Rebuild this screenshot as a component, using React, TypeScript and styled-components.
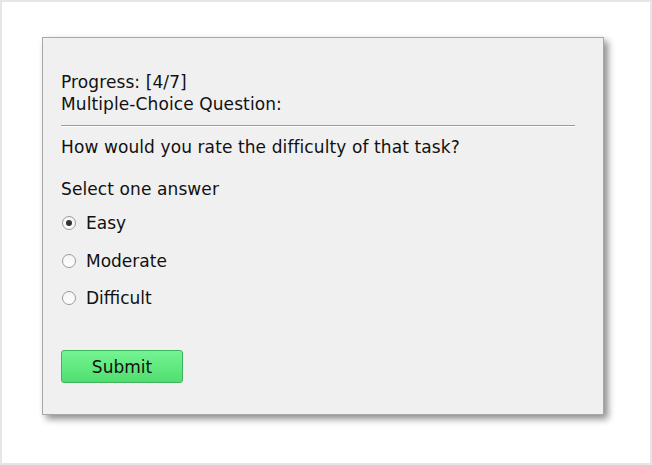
import React, { useState } from "react";
import styled, { createGlobalStyle } from "styled-components";

const Global = createGlobalStyle`
  html, body { margin: 0; padding: 0; background: #ffffff; }
  * { box-sizing: border-box; }
`;

const Frame = styled.div`
  width: 652px;
  height: 465px;
  border: 2px solid #e6e6e6;
  background: #ffffff;
  padding: 35px 0 0 40px;
  font-family: "DejaVu Sans", sans-serif;
  color: #111111;
`;

const Panel = styled.div`
  width: 562px;
  height: 378px;
  background: #f0f0f0;
  border: 1px solid #a8a8a8;
  box-shadow: 4px 4px 7px rgba(0, 0, 0, 0.45);
  padding: 33px 0 0 18px;
  display: flex;
  flex-direction: column;
`;

const Line = styled.div`
  font-size: 17px;
  line-height: 22px;
  letter-spacing: 0.1px;
`;

const Separator = styled.hr`
  width: 514px;
  margin: 10px 0 9px 0;
  border: 0;
  border-top: 1px solid #9a9a9a;
  border-bottom: 1px solid #ffffff;
  height: 0;
`;

const Prompt = styled(Line)`
  margin-top: 20px;
`;

const Options = styled.div`
  display: flex;
  flex-direction: column;
  gap: 15.5px;
  margin-top: 12px;
`;

const OptionRow = styled.label`
  display: flex;
  align-items: center;
  gap: 10px;
  font-size: 17px;
  line-height: 22px;
  cursor: pointer;
`;

const RadioDot = styled.span<{ $checked: boolean }>`
  width: 14px;
  height: 14px;
  border-radius: 50%;
  border: 1px solid #9a9a9a;
  background: linear-gradient(#f4f4f4, #ffffff);
  display: flex;
  align-items: center;
  justify-content: center;
  margin-left: 1px;
  &::after {
    content: "";
    width: 6px;
    height: 6px;
    border-radius: 50%;
    background: ${(p) => (p.$checked ? "#333333" : "transparent")};
  }
`;

const SubmitButton = styled.button`
  margin-top: 41px;
  width: 122px;
  height: 33px;
  border: 1px solid #3fb45c;
  border-radius: 3px;
  background: linear-gradient(#74f491, #50de70);
  font-family: inherit;
  font-size: 17px;
  color: #111111;
  padding: 0;
  cursor: pointer;
`;

const options = ["Easy", "Moderate", "Difficult"];

export default function App() {
  const [choice, setChoice] = useState("Easy");
  return (
    <>
      <Global />
      <Frame>
        <Panel>
          <Line>Progress: [4/7]</Line>
          <Line>Multiple-Choice Question:</Line>
          <Separator />
          <Line>How would you rate the difficulty of that task?</Line>
          <Prompt>Select one answer</Prompt>
          <Options>
            {options.map((o) => (
              <OptionRow key={o} onClick={() => setChoice(o)}>
                <RadioDot $checked={choice === o} />
                {o}
              </OptionRow>
            ))}
          </Options>
          <div>
            <SubmitButton>Submit</SubmitButton>
          </div>
        </Panel>
      </Frame>
    </>
  );
}
